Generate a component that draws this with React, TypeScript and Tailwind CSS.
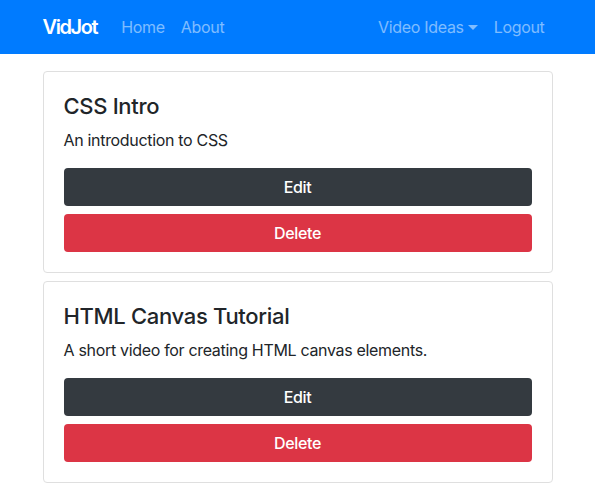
const ideas = [
  { title: "CSS Intro", details: "An introduction to CSS" },
  { title: "HTML Canvas Tutorial", details: "A short video for creating HTML canvas elements." },
];

function Navbar() {
  return (
    <nav className="h-[54px] bg-[#007bff]">
      <div className="mx-auto flex h-full max-w-[540px] items-center px-[15px]">
        <a className="mr-4 text-[20px] font-semibold tracking-[-0.07em] text-white">VidJot</a>
        <ul className="flex">
          <li><a className="px-2 text-base text-white/50">Home</a></li>
          <li><a className="px-2 text-base text-white/50">About</a></li>
        </ul>
        <ul className="ml-auto flex">
          <li>
            <a className="flex items-center px-2 text-base text-white/50">
              Video Ideas
              <span className="ml-[4px] mt-[1px] h-0 w-0 border-x-[5px] border-t-[5px] border-x-transparent border-t-white/50" />
            </a>
          </li>
          <li><a className="px-2 text-base text-white/50">Logout</a></li>
        </ul>
      </div>
    </nav>
  );
}

export default function App() {
  return (
    <div className="min-h-screen bg-white font-['Inter','Liberation_Sans',sans-serif] tracking-[-0.02em] text-[#212529]">
      <Navbar />
      <div className="mx-auto mt-[17px] max-w-[540px] px-[15px]">
        {ideas.map((idea) => (
          <div key={idea.title} className="mb-2 rounded border border-[#dfdfdf] px-5 pb-5 pt-5">
            <h4 className="text-[22px] font-medium leading-[28px]">{idea.title}</h4>
            <p className="mt-2 text-base leading-6">{idea.details}</p>
            <button className="mt-4 block h-[38px] w-full rounded bg-[#343a40] text-base font-medium text-white">
              Edit
            </button>
            <button className="mt-2 block h-[38px] w-full rounded bg-[#dc3545] text-base font-medium text-white">
              Delete
            </button>
          </div>
        ))}
      </div>
    </div>
  );
}
